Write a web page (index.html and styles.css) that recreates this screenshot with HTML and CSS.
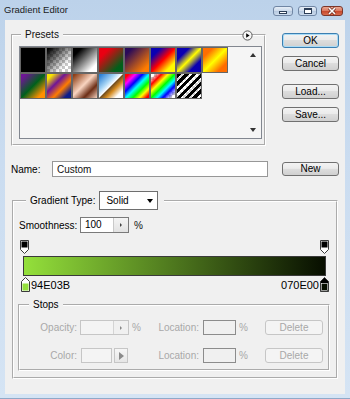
FILE: index.html
```html
<!DOCTYPE html>
<html lang="en">
<head>
  <meta charset="UTF-8">
  <meta name="viewport" content="width=device-width, initial-scale=1.0">
  <title>Gradient Editor</title>
  <link rel="stylesheet" href="styles.css">
</head>
<body>
<div class="window">
  <div class="titlebar">
    <span class="title">Gradient Editor</span>
    <div class="caption">
      <span class="cap-btn min"><i></i></span>
      <span class="cap-btn max"><i></i></span>
      <span class="cap-btn close">
        <svg width="10" height="8" viewBox="0 0 10 8"><path d="M2 1L8 7M8 1L2 7" stroke="#6b2a1e" stroke-width="3"/><path d="M2 1L8 7M8 1L2 7" stroke="#fff" stroke-width="1.6"/></svg>
      </span>
    </div>
  </div>

  <div class="client">
    <div class="top">
      <fieldset class="group presets">
        <legend>Presets</legend>
        <span class="menu-btn">
          <svg width="11" height="11" viewBox="0 0 11 11"><circle cx="5.5" cy="5.5" r="4.6" fill="#f6f6f6" stroke="#5a5a5a"/><path d="M4.2 3.2L7.6 5.5L4.2 7.8Z" fill="#000"/></svg>
        </span>
        <div class="preset-list">
          <div class="swatches">
            <span class="sw sw1"></span>
            <span class="sw sw2"></span>
            <span class="sw sw3"></span>
            <span class="sw sw4"></span>
            <span class="sw sw5"></span>
            <span class="sw sw6"></span>
            <span class="sw sw7"></span>
            <span class="sw sw8"></span>
            <span class="sw sw9"></span>
            <span class="sw sw10"></span>
            <span class="sw sw11"></span>
            <span class="sw sw12"></span>
            <span class="sw sw13"></span>
            <span class="sw sw14"></span>
            <span class="sw sw15"></span>
          </div>
          <div class="scroll">
            <span class="arrow up"></span>
            <span class="arrow down"></span>
          </div>
        </div>
      </fieldset>

      <div class="side">
        <button class="btn default">OK</button>
        <button class="btn">Cancel</button>
        <button class="btn load">Load...</button>
        <button class="btn">Save...</button>
      </div>
    </div>

    <div class="name-row">
      <label for="name">Name:</label>
      <input type="text" id="name" class="text" value="Custom">
      <button class="btn new">New</button>
    </div>

    <fieldset class="group gradient">
      <legend>
        Gradient Type:
        <span class="select">Solid <span class="caret"></span></span>
      </legend>

      <div class="smooth-row">
        <span class="smooth-label">Smoothness:</span>
        <span class="field spin"><span class="val">100</span><span class="spinner"><span class="tri"></span></span></span>
        <span class="pct">%</span>
      </div>

      <div class="ramp">
        <div class="stops-top">
          <svg width="9" height="14" viewBox="0 0 9 14"><path d="M0.5 0.5H8.5V9.5L4.5 13.5L0.5 9.5Z" fill="#fff" stroke="#3a3a3a"/><rect x="1.5" y="1.5" width="6" height="6" fill="#000"/></svg>
          <svg width="9" height="14" viewBox="0 0 9 14"><path d="M0.5 0.5H8.5V9.5L4.5 13.5L0.5 9.5Z" fill="#fff" stroke="#3a3a3a"/><rect x="1.5" y="1.5" width="6" height="6" fill="#000"/></svg>
        </div>
        <div class="bar"></div>
        <div class="stops-bottom">
          <span class="stop-group">
            <svg width="9" height="15" viewBox="0 0 9 15"><path d="M4.5 0.5L8.5 4.5V14.5H0.5V4.5Z" fill="#fff" stroke="#3a3a3a"/><rect x="1.5" y="6.5" width="6" height="7" fill="#94e03b"/></svg>
            <span class="hex">94E03B</span>
          </span>
          <span class="stop-group">
            <span class="hex">070E00</span>
            <svg width="9" height="15" viewBox="0 0 9 15"><path d="M4.5 0.5L8.5 4.5V14.5H0.5V4.5Z" fill="#000" stroke="#3a3a3a"/><rect x="1.5" y="6.5" width="6" height="7" fill="#070e00" stroke="#fff" stroke-width="0.6"/></svg>
          </span>
        </div>
      </div>

      <fieldset class="group stops">
        <legend>Stops</legend>
        <div class="stop-row">
          <span class="lbl">Opacity:</span>
          <span class="cell">
            <span class="field spin dis"><span class="val"></span><span class="spinner"><span class="tri"></span></span></span>
            <span class="pct">%</span>
          </span>
          <span class="lbl">Location:</span>
          <span class="cell"><span class="field loc"></span></span>
          <span class="pct">%</span>
          <button class="btn dis-btn">Delete</button>
        </div>
        <div class="stop-row">
          <span class="lbl">Color:</span>
          <span class="cell">
            <span class="color-box"></span>
            <span class="color-arrow"><span class="tri-big"></span></span>
          </span>
          <span class="lbl">Location:</span>
          <span class="cell"><span class="field loc"></span></span>
          <span class="pct">%</span>
          <button class="btn dis-btn">Delete</button>
        </div>
      </fieldset>
    </fieldset>
  </div>
</div>
</body>
</html>
```

FILE: styles.css
```css
* {
  box-sizing: border-box;
}
body {
  margin: 0;
  font-family: "Liberation Sans", Arial, sans-serif;
  font-size: 10px;
  color: #111;
}
button,
input {
  font: inherit;
  color: inherit;
  margin: 0;
}

/* window frame */
.window {
  width: 350px;
  height: 399px;
  display: flex;
  flex-direction: column;
  padding: 0 5px 4px;
  background: linear-gradient(#bcd2ea, #cadcf0 40%, #d5e4f4);
  border-bottom: 1px solid #8fa9c8;
}
.titlebar {
  display: flex;
  justify-content: space-between;
  height: 20px;
  margin: 0 -5px;
  padding: 0 7px 0 4px;
}
.title {
  font-size: 9.5px;
  line-height: 19px;
  color: #1b1b1b;
}
.caption {
  display: flex;
  gap: 4px;
  padding-top: 6px;
}
.cap-btn {
  height: 10px;
  display: flex;
  align-items: center;
  justify-content: center;
  border: 1px solid #7086a4;
  border-radius: 3px;
  background: linear-gradient(#e6eef7, #cbd9ea 50%, #b5c8df 51%, #cddcee);
}
.min {
  width: 20px;
  margin-right: 1px;
}
.max {
  width: 19px;
}
.close {
  width: 22px;
  border-color: #7b362a;
  background: linear-gradient(#eba892, #da765e 50%, #c6472c 51%, #d96b4d);
}
.min i {
  width: 8px;
  height: 3px;
  margin-top: 3px;
  border: 1px solid #2c3e57;
  background: #fff;
}
.max i {
  width: 8px;
  height: 6px;
  border: 1px solid #2c3e57;
  border-top-width: 2px;
  background: #fff;
}

/* dialog body */
.client {
  flex: 1;
  background: #f0f0f0;
  padding: 9px 6px 0;
}
.top {
  display: flex;
  align-items: flex-start;
  gap: 16px;
}
.group {
  margin: 0;
  border: 2px groove #fff;
}
.group legend {
  font-size: 10px;
  line-height: 12px;
  padding: 0 4px;
}

.presets {
  position: relative;
  width: 255px;
  padding: 5px 2px 5px 6px;
}
.presets legend {
  margin-left: 2px;
}
.menu-btn {
  position: absolute;
  top: -11px;
  right: 11px;
  display: flex;
}
.preset-list {
  display: flex;
  height: 93px;
  border: 1px solid #828790;
  background: #f5f5f5;
}
.swatches {
  flex: 1;
  display: grid;
  grid-template-columns: repeat(8, 26px);
  grid-auto-rows: 26px;
  align-content: start;
}
.sw {
  border: 1px solid #666;
}
.sw1 { background: #000; }
.sw2 {
  background: linear-gradient(to bottom right, #000 5%, rgba(0, 0, 0, 0) 75%),
    repeating-conic-gradient(#c8c8c8 0 25%, #fff 0 50%) 0 0 / 6px 6px;
}
.sw3 { background: linear-gradient(to bottom right, #000 18%, #fff 82%); }
.sw4 { background: linear-gradient(to bottom right, #ea0012 22%, #00601a 80%); }
.sw5 { background: linear-gradient(to bottom right, #290a59 15%, #ff7c00 85%); }
.sw6 { background: linear-gradient(to bottom right, #0a00b2 20%, #ff0000 50%, #fffc00 80%); }
.sw7 { background: linear-gradient(to bottom right, #0a00b2 25%, #fffc00 50%, #0a00b2 75%); }
.sw8 { background: linear-gradient(to bottom right, #ff6e02 20%, #ffff00 50%, #ff6d00 80%); }
.sw9 { background: linear-gradient(to bottom right, #6f1596 10%, #00601b 50%, #ff9000 85%); }
.sw10 { background: linear-gradient(to bottom right, #f9e600 12%, #6f1596 38%, #ff7c00 62%, #0c1d8c 86%); }
.sw11 { background: linear-gradient(to bottom right, #8e3f17 5%, #f9d5c1 45%, #6c2e16 72%, #f3d1bf 100%); }
.sw12 { background: linear-gradient(to bottom right, #2a7fd4 5%, #a9d6f5 35%, #fff 49%, #6b4a1e 51%, #d58a1e 64%, #fff 84%); }
.sw13 { background: linear-gradient(to bottom right, #f00 8%, #f0f 22%, #00f 37%, #0ff 51%, #0f0 66%, #ff0 80%, #f00 94%); }
.sw14 {
  background: linear-gradient(to bottom right, rgba(255, 0, 0, 0) 8%, #f00 22%, #ff0 36%, #0f0 50%, #0ff 62%, #00f 74%, rgba(255, 0, 255, 0) 92%),
    repeating-conic-gradient(#c8c8c8 0 25%, #fff 0 50%) 0 0 / 6px 6px;
}
.sw15 {
  background: repeating-linear-gradient(135deg, #000 0 3px, rgba(0, 0, 0, 0) 3px 5.5px),
    repeating-conic-gradient(#d0d0d0 0 25%, #fff 0 50%) 0 0 / 6px 6px;
}
.scroll {
  width: 16px;
  display: flex;
  flex-direction: column;
  justify-content: space-between;
  align-items: center;
  padding: 6px 0;
}
.arrow {
  width: 0;
  height: 0;
  border-left: 3.5px solid transparent;
  border-right: 3.5px solid transparent;
}
.arrow.up {
  border-bottom: 4px solid #333;
}
.arrow.down {
  border-top: 4px solid #333;
}

/* buttons */
.side {
  display: flex;
  flex-direction: column;
  gap: 8px;
  width: 57px;
  padding-top: 4px;
}
.btn {
  height: 15px;
  padding: 0;
  border: 1px solid #707070;
  border-radius: 3px;
  background: linear-gradient(#f3f3f3, #ebebeb 45%, #dddddd 50%, #d0d0d0);
  line-height: 13px;
  text-align: center;
  color: #000;
}
.btn.default {
  border-color: #3c7fb1;
  box-shadow: inset 0 0 0 1px #a9dbf6;
}
.side .load {
  margin-top: 5px;
}

/* name */
.name-row {
  display: flex;
  align-items: center;
  height: 16px;
  margin-top: 15px;
}
.name-row label {
  width: 41px;
  color: #000;
}
.text {
  width: 216px;
  height: 16px;
  padding: 0 4px;
  border: 1px solid #979797;
  background: #fff;
  outline: none;
}
.btn.new {
  width: 57px;
  height: 14px;
  margin-left: 14px;
  line-height: 12px;
}

/* gradient group */
.gradient {
  margin: 14px 1px 0;
  padding: 7px 6px 6px 4px;
}
.gradient > legend {
  display: flex;
  align-items: center;
  margin-left: 8px;
  padding: 0 6px 0 4px;
  line-height: 19px;
  color: #000;
}
.select {
  display: flex;
  align-items: center;
  justify-content: space-between;
  width: 59px;
  height: 19px;
  margin-left: 4px;
  padding: 0 4px 0 6px;
  border: 1px solid #6e6e6e;
  background: #fff;
}
.caret {
  width: 0;
  height: 0;
  border-left: 3.5px solid transparent;
  border-right: 3.5px solid transparent;
  border-top: 4px solid #000;
}

.smooth-row {
  display: flex;
  align-items: center;
  height: 16px;
}
.smooth-label {
  width: 62px;
  padding-left: 1px;
  color: #000;
}
.field {
  display: flex;
  height: 16px;
  border: 1px solid #7a7a7a;
  background: #fff;
}
.field.spin {
  width: 49px;
}
.field .val {
  flex: 1;
  padding-left: 4px;
  line-height: 14px;
  color: #000;
}
.spinner {
  width: 15px;
  display: flex;
  align-items: center;
  justify-content: center;
  border-left: 1px solid #c9c9c9;
  background: linear-gradient(#f4f4f4, #e2e2e2);
}
.tri {
  width: 0;
  height: 0;
  border-top: 2px solid transparent;
  border-bottom: 2px solid transparent;
  border-left: 2px solid #444;
}
.pct {
  margin-left: 5px;
}

/* gradient ramp */
.ramp {
  margin-top: 7px;
}
.stops-top {
  display: flex;
  justify-content: space-between;
  height: 13px;
  padding: 0 1px 0 2px;
}
.stops-top svg,
.stops-bottom svg {
  display: block;
}
.bar {
  height: 20px;
  margin: 3px 4px 0 5px;
  border: 1px solid #3a3a3a;
  background: linear-gradient(to right, #94e03b, #070e00);
}
.stops-bottom {
  display: flex;
  justify-content: space-between;
  height: 15px;
  margin-top: 1px;
  padding: 0 1px 0 3px;
}
.stop-group {
  display: flex;
  align-items: flex-end;
  gap: 1px;
}
.hex {
  font-size: 11px;
  line-height: 13px;
  color: #000;
}

/* stops group */
.stops {
  margin-top: 7px;
  padding: 9px 5px 6px 0;
  color: #a8a8a8;
}
.stops > legend {
  margin-left: 9px;
  color: #000;
}
.stop-row {
  display: grid;
  grid-template-columns: 57px 64px 58px 37px 29px 58px;
  align-items: center;
  height: 15px;
}
.stop-row + .stop-row {
  margin-top: 13px;
}
.lbl {
  text-align: right;
}
.cell {
  display: flex;
  align-items: center;
}
.stop-row .pct {
  margin-left: 3px;
}
.field.dis {
  width: 50px;
  height: 15px;
  margin-left: 3px;
  border-color: #c6c6c6;
  background: #f4f4f4;
}
.field.dis .spinner {
  border-left-color: #d4d4d4;
  background: #f0f0f0;
}
.field.dis .tri {
  border-left-color: #888;
}
.field.loc {
  width: 33px;
  height: 15px;
  margin-left: 4px;
  border-color: #8c8c8c;
  background: #f0f0f0;
}
.color-box {
  width: 31px;
  height: 15px;
  margin-left: 4px;
  border: 1px solid #c6c6c6;
  background: #f4f4f4;
}
.color-arrow {
  display: flex;
  align-items: center;
  justify-content: center;
  width: 14px;
  height: 15px;
  margin-left: 2px;
  border: 1px solid #c6c6c6;
  background: linear-gradient(#f6f6f6, #e6e6e6);
}
.tri-big {
  width: 0;
  height: 0;
  border-top: 4px solid transparent;
  border-bottom: 4px solid transparent;
  border-left: 5px solid #8a8a8a;
}
.btn.dis-btn {
  width: 58px;
  border-color: #c6c6c6;
  background: #f4f4f4;
  color: #a8a8a8;
}
```
